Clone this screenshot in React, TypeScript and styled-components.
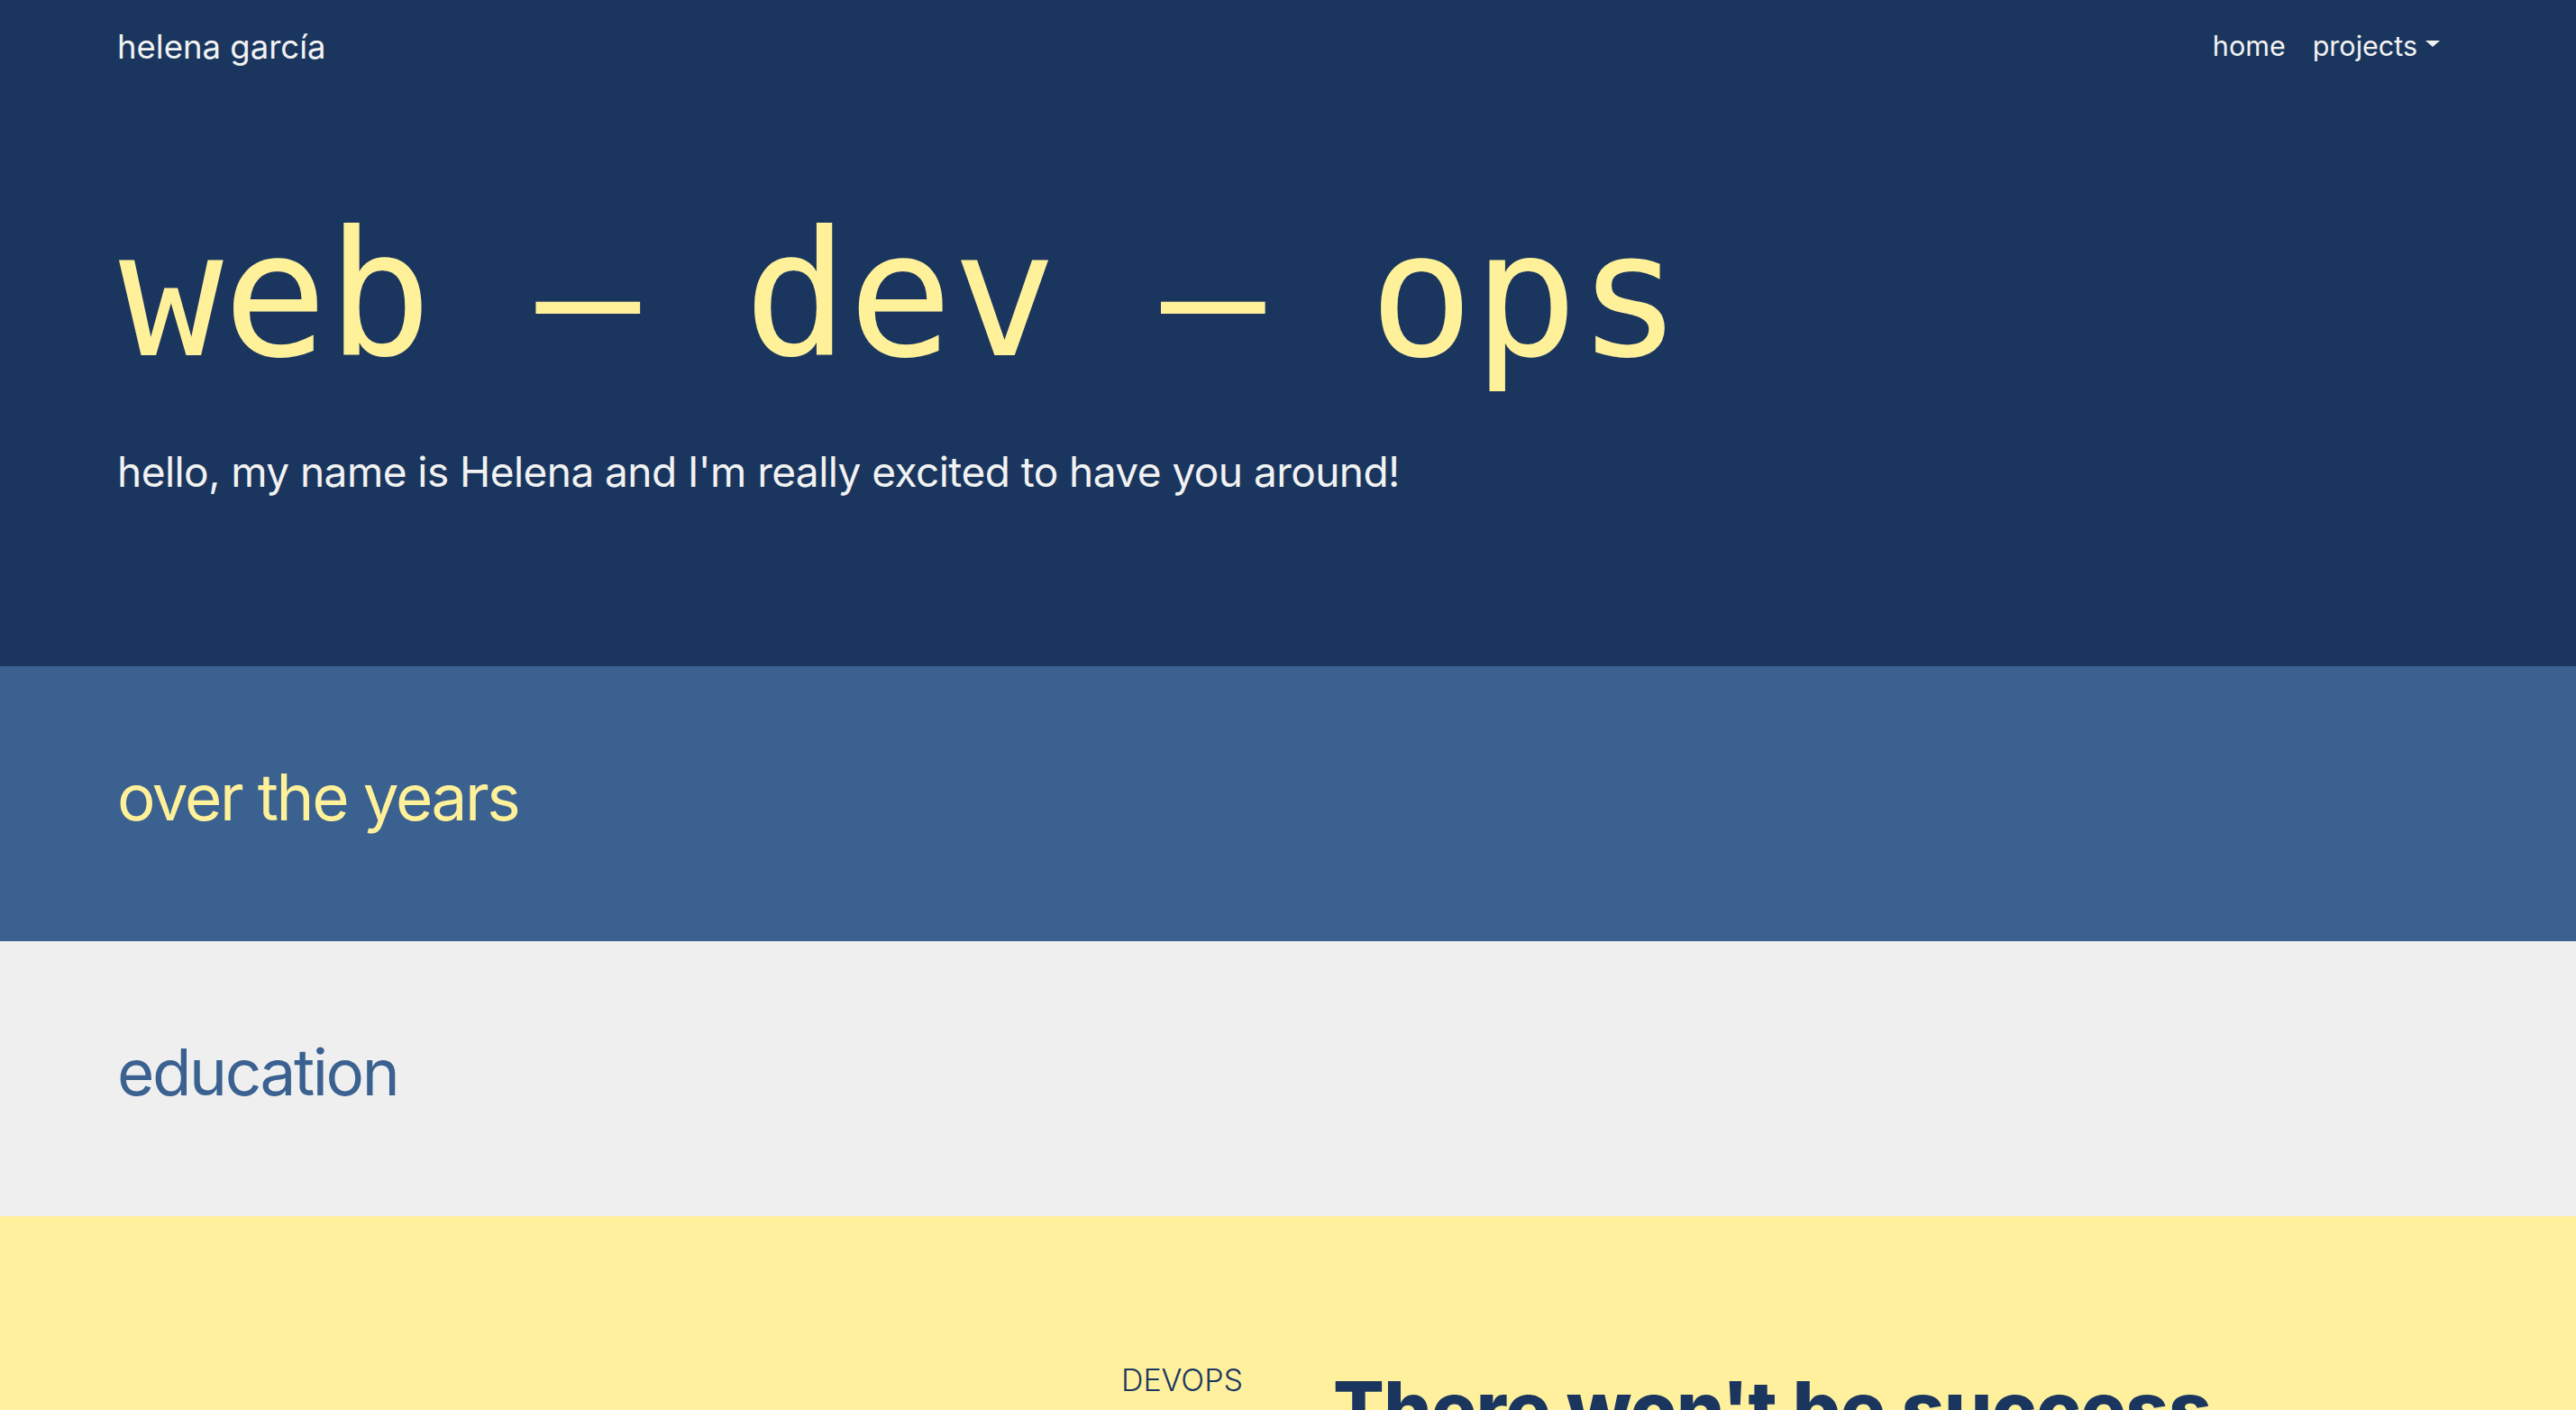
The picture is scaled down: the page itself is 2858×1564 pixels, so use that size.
import React from "react";
import styled, { createGlobalStyle } from "styled-components";

const GlobalStyle = createGlobalStyle`
  html, body { margin: 0; padding: 0; }
  body {
    font-family: Inter, "Noto Sans", "Liberation Sans", sans-serif;
    background: #efefef;
    -webkit-font-smoothing: antialiased;
  }
  * { box-sizing: border-box; }
`;

const NAVY = "#1a365f";
const BLUE = "#3a6190";
const GRAY = "#efefef";
const YELLOW = "#fff09e";
const TEXT_YELLOW = "#fff09a";

const Hero = styled.header`
  background: ${NAVY};
  height: 739px;
  display: flex;
  flex-direction: column;
`;

const NavBar = styled.nav`
  height: 102px;
  display: flex;
  align-items: center;
  justify-content: space-between;
  padding: 0 136px 0 130px;
`;

const Brand = styled.a`
  font-size: 36.5px;
  line-height: 1.5;
  color: #f2f2f2;
  text-decoration: none;
  padding-top: 2px;
`;

const NavList = styled.ul`
  display: flex;
  list-style: none;
  margin: 0;
  padding: 0;
  align-items: center;
`;

const NavLink = styled.a<{ $dropdown?: boolean }>`
  display: flex;
  align-items: center;
  padding: 0 15px;
  font-size: 30.5px;
  line-height: 1.5;
  color: #f2f2f2;
  text-decoration: none;
  &::after {
    content: ${(p) => (p.$dropdown ? '""' : "none")};
    display: inline-block;
    margin-left: 9px;
    border-top: 7px solid #f2f2f2;
    border-left: 8px solid transparent;
    border-right: 8px solid transparent;
    margin-top: -5px;
  }
`;

const HeroBody = styled.div`
  padding: 111px 130px 0;
`;

const HeroTitle = styled.h1`
  margin: 0;
  font-family: "DejaVu Sans Mono", "Liberation Mono", monospace;
  font-weight: 400;
  font-size: 192px;
  line-height: 1.2;
  color: ${TEXT_YELLOW};
  white-space: pre;
  margin-left: 2px;
`;

const Lead = styled.p`
  margin: 46px 0 0;
  font-size: 46px;
  line-height: 1.5;
  color: #f2f2f2;
  letter-spacing: -0.55px;
`;

const Band = styled.section<{ $bg: string }>`
  background: ${(p) => p.$bg};
  padding: 102px 130px;
`;

const BandTitle = styled.h2<{ $color: string }>`
  margin: 0 0 14.6px;
  font-size: 71px;
  font-weight: 400;
  line-height: 1.22;
  letter-spacing: -2.4px;
  color: ${(p) => p.$color};
`;

const Quote = styled.section`
  background: ${YELLOW};
  padding: 156px 130px 120px;
  display: grid;
  grid-template-columns: 1fr 1fr;
  column-gap: 100px;
  align-items: start;
`;

const Kicker = styled.div`
  text-align: right;
  font-size: 34px;
  font-weight: 300;
  line-height: 1.5;
  color: ${NAVY};
`;

const QuoteTitle = styled.h3`
  margin: 8px 0 0;
  font-size: 84px;
  font-weight: 800;
  line-height: 1.2;
  letter-spacing: -0.6px;
  color: ${NAVY};
`;

export default function App() {
  return (
    <>
      <GlobalStyle />
      <Hero>
        <NavBar>
          <Brand href="#">helena garcía</Brand>
          <NavList>
            <li>
              <NavLink href="#">home</NavLink>
            </li>
            <li>
              <NavLink href="#" $dropdown>
                projects
              </NavLink>
            </li>
          </NavList>
        </NavBar>
        <HeroBody>
          <HeroTitle>web – dev – ops</HeroTitle>
          <Lead>hello, my name is Helena and I'm really excited to have you around!</Lead>
        </HeroBody>
      </Hero>
      <Band $bg={BLUE}>
        <BandTitle $color={TEXT_YELLOW}>over the years</BandTitle>
      </Band>
      <Band $bg={GRAY}>
        <BandTitle $color={BLUE}>education</BandTitle>
      </Band>
      <Quote>
        <Kicker>DEVOPS</Kicker>
        <QuoteTitle>There won't be success</QuoteTitle>
      </Quote>
    </>
  );
}
